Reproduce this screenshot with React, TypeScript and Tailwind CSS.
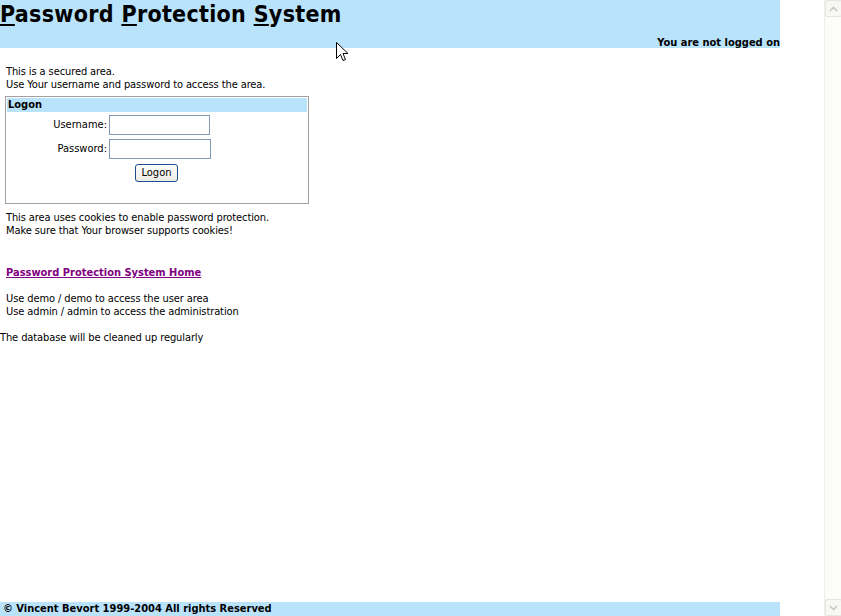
import React from "react";

const font = "font-['DejaVu_Sans_Condensed','Liberation_Sans',sans-serif]";

function ScrollBtn({ up }: { up: boolean }) {
  return (
    <div className="w-[17px] h-[17px] rounded-[2px] border border-[#e6e5de] bg-[#f7f7f3] flex items-center justify-center">
      <svg width="9" height="6" viewBox="0 0 9 6">
        <path
          d={up ? "M1 5 L4.5 1.5 L8 5" : "M1 1 L4.5 4.5 L8 1"}
          fill="none"
          stroke="#c9c8c0"
          strokeWidth="1.6"
        />
      </svg>
    </div>
  );
}

export default function App() {
  return (
    <div className={`relative flex w-[841px] h-[616px] bg-white text-black ${font}`}>
      <div className="flex flex-col w-[824px] h-[616px]">
        <div className="w-[780px] h-[48px] bg-[#b9e3fb] flex flex-col justify-between">
          <div className="text-[23px] font-bold leading-[30px] -mt-[1px] pl-0 tracking-[0.3px]">
            <span className="underline decoration-2 underline-offset-[2px]">P</span>assword{" "}
            <span className="underline decoration-2 underline-offset-[2px]">P</span>rotection{" "}
            <span className="underline decoration-2 underline-offset-[2px]">S</span>ystem
          </div>
          <div className="text-right text-[11px] font-bold leading-[13px] -mb-[1px]">
            You are not logged on
          </div>
        </div>

        <div className="text-[11px] leading-[13px] pl-[6px] pt-[17px] tracking-[-0.1px]">
          <div>This is a secured area.</div>
          <div>Use Your username and password to access the area.</div>
        </div>

        <div className="ml-[5px] mt-[5px] w-[304px] h-[108px] border border-[#a0a0a0] p-[1px]">
          <div className="bg-[#b9e3fb] text-[11px] font-bold leading-[14px] pl-[1px]">Logon</div>
          <div className="flex flex-col mt-[3px]">
            <div className="flex items-center h-[20px]">
              <div className="w-[101px] text-right text-[11px] pr-[1px]">Username:</div>
              <input className="w-[101px] h-[20px] border border-[#7f9db9] bg-white outline-none ml-[1px]" />
            </div>
            <div className="flex items-center h-[20px] mt-[4px]">
              <div className="w-[101px] text-right text-[11px] pr-[1px]">Password:</div>
              <input type="password" className="w-[102px] h-[20px] border border-[#7f9db9] bg-white outline-none ml-[1px]" />
            </div>
            <div className="flex mt-[5px] pl-[128px]">
              <button className="w-[43px] h-[18px] rounded-[3px] border border-[#1c4d8c] bg-gradient-to-b from-white to-[#ecebe6] text-[11px] leading-[14px]">
                Logon
              </button>
            </div>
          </div>
        </div>

        <div className="text-[11px] leading-[13px] pl-[6px] pt-[7px] tracking-[-0.1px]">
          <div>This area uses cookies to enable password protection.</div>
          <div>Make sure that Your browser supports cookies!</div>
        </div>

        <div className="text-[11px] leading-[13px] pl-[6px] pt-[29px]">
          <a href="#" className="font-bold text-[#800080] underline">
            Password Protection System Home
          </a>
        </div>

        <div className="text-[11px] leading-[13px] pl-[6px] pt-[13px] tracking-[-0.1px]">
          <div>Use demo / demo to access the user area</div>
          <div>Use admin / admin to access the administration</div>
        </div>

        <div className="text-[11px] leading-[13px] pt-[13px] tracking-[-0.1px]">The database will be cleaned up regularly</div>

        <div className="flex-1" />
        <div className="w-[780px] h-[14px] bg-[#b9e3fb] text-[11px] font-bold leading-[14px] pl-[3px]">
          © Vincent Bevort 1999-2004 All rights Reserved
        </div>
      </div>

      <div className="w-[17px] h-[616px] flex flex-col justify-between bg-[#fcfcfb] border-l border-[#efeee8]">
        <ScrollBtn up />
        <ScrollBtn up={false} />
      </div>

      <svg className="absolute left-[336px] top-[42px]" width="13" height="21" viewBox="0 0 13 21">
        <path d="M0.5 0.5 L0.5 16.5 L4.5 12.5 L7 18.5 L9.5 17.5 L7 11.5 L12 11.5 Z" fill="white" stroke="black" strokeWidth="1" />
      </svg>
    </div>
  );
}
